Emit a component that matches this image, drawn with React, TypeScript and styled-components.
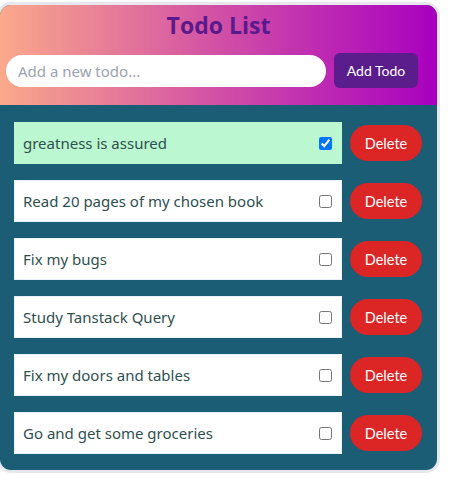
import React, { useState } from "react";
import styled, { createGlobalStyle } from "styled-components";

const Global = createGlobalStyle`
  html, body { margin: 0; padding: 0; background: #ffffff; }
  body { font-family: "Noto Sans", "Open Sans", sans-serif; }
  * { box-sizing: border-box; }
`;

const Page = styled.div`
  padding-top: 2px;
  width: 450px;
`;

const Card = styled.div`
  margin-left: -3px;
  width: 443px;
  border: 3px solid #e6e8ee;
  border-radius: 14px;
  overflow: hidden;
  background: #1b5d75;
`;

const Header = styled.header`
  background: linear-gradient(to right, #fba98b 0%, #d353a4 48%, #a800c0 100%);
  padding: 5px 19px 17px 6px;
  display: flex;
  flex-direction: column;
  gap: 13px;
`;

const Title = styled.h1`
  margin: 0 -13px 0 0;
  font-family: "Open Sans", "Noto Sans", sans-serif;
  font-size: 23px;
  line-height: 30px;
  font-weight: 700;
  color: #5a1a8c;
  text-align: center;
`;

const InputRow = styled.div`
  display: flex;
  align-items: center;
  gap: 8px;
`;

const TodoInput = styled.input`
  flex: 1;
  height: 32px;
  border: none;
  border-radius: 16px;
  padding: 0 12px;
  font-family: "Noto Sans", "Open Sans", sans-serif;
  font-size: 15px;
  color: #333;
  background: #ffffff;
  outline: none;
  &::placeholder { color: #9ca3af; }
`;

const AddButton = styled.button`
  width: 84px;
  height: 35px;
  border: none;
  border-radius: 6px;
  background: #5b1d8b;
  color: #ffffff;
  font-family: Lato, "Noto Sans", sans-serif;
  font-size: 14px;
  padding: 0;
  cursor: pointer;
`;

const List = styled.ul`
  list-style: none;
  margin: 0;
  padding: 17px 15px 16px 14px;
  display: flex;
  flex-direction: column;
  gap: 16px;
`;

const Item = styled.li`
  display: flex;
  align-items: center;
  gap: 8px;
`;

const Row = styled.label<{ $done: boolean }>`
  flex: 1;
  height: 42px;
  display: flex;
  align-items: center;
  justify-content: space-between;
  padding: 0 9px 0 8px;
  background: ${(p) => (p.$done ? "#bbf7d0" : "#ffffff")};
  border: 1px solid ${(p) => (p.$done ? "#bbf7d0" : "#e8f1fb")};
  color: #2f4f4f;
  font-family: "Noto Sans", "Open Sans", sans-serif;
  font-size: 15px;
`;

const Check = styled.input`
  width: 13px;
  height: 13px;
  margin: 0;
`;

const DeleteButton = styled.button`
  width: 72px;
  height: 36px;
  border: none;
  border-radius: 18px;
  background: #dc2626;
  color: #ffffff;
  font-family: Lato, "Noto Sans", sans-serif;
  font-size: 14.5px;
  padding: 0;
  cursor: pointer;
`;

const initial = [
  { id: 1, text: "greatness is assured", done: true },
  { id: 2, text: "Read 20 pages of my chosen book", done: false },
  { id: 3, text: "Fix my bugs", done: false },
  { id: 4, text: "Study Tanstack Query", done: false },
  { id: 5, text: "Fix my doors and tables", done: false },
  { id: 6, text: "Go and get some groceries", done: false },
];

export default function App() {
  const [todos, setTodos] = useState(initial);
  return (
    <Page>
      <Global />
      <Card>
        <Header>
          <Title>Todo List</Title>
          <InputRow>
            <TodoInput placeholder="Add a new todo..." />
            <AddButton>Add Todo</AddButton>
          </InputRow>
        </Header>
        <List>
          {todos.map((t) => (
            <Item key={t.id}>
              <Row $done={t.done}>
                <span>{t.text}</span>
                <Check
                  type="checkbox"
                  checked={t.done}
                  onChange={() =>
                    setTodos((ts) => ts.map((x) => (x.id === t.id ? { ...x, done: !x.done } : x)))
                  }
                />
              </Row>
              <DeleteButton onClick={() => setTodos((ts) => ts.filter((x) => x.id !== t.id))}>
                Delete
              </DeleteButton>
            </Item>
          ))}
        </List>
      </Card>
    </Page>
  );
}
